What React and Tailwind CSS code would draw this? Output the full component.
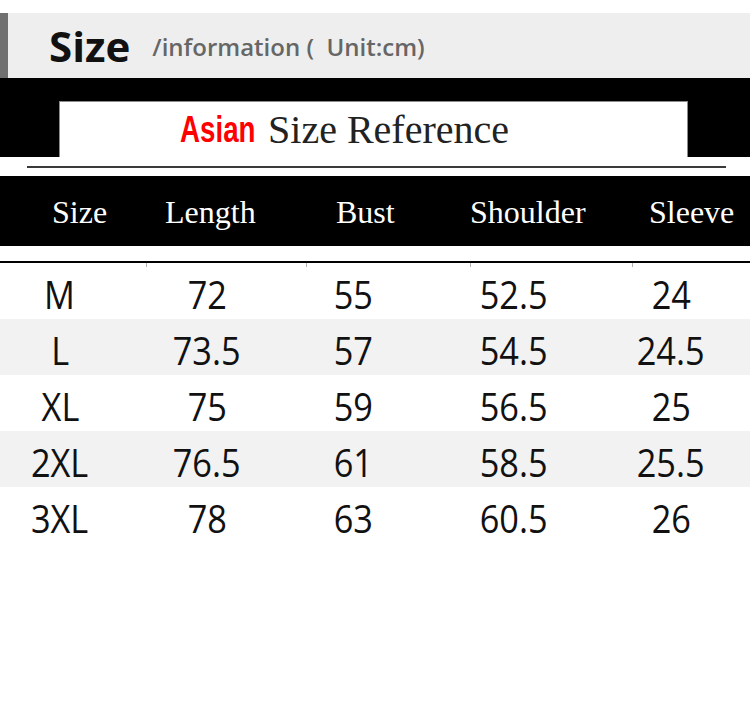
import React from "react";

const rows = [
  ["M", "72", "55", "52.5", "24"],
  ["L", "73.5", "57", "54.5", "24.5"],
  ["XL", "75", "59", "56.5", "25"],
  ["2XL", "76.5", "61", "58.5", "25.5"],
  ["3XL", "78", "63", "60.5", "26"],
];

const headers = [
  ["Size", "w-[113px]"],
  ["Length", "w-[171px]"],
  ["Bust", "w-[134px]"],
  ["Shoulder", "w-[179px]"],
  ["Sleeve", "flex-1"],
];

export default function App() {
  return (
    <div className="w-[750px] h-[707px] bg-white overflow-hidden">
      <div className="h-[13px]" />
      {/* Title bar */}
      <div className="flex h-[65px]">
        <div className="w-[8px] bg-[#707070]" />
        <div className="flex-1 bg-[#eeeeee] flex items-center pl-[41px]">
          <span
            className="text-[42px] font-bold text-[#111] leading-none"
            style={{ fontFamily: '"Open Sans", sans-serif' }}
          >
            Size
          </span>
          <span
            className="ml-[22px] mt-[2px] text-[24px] font-semibold text-[#666] leading-none whitespace-pre"
            style={{ fontFamily: '"Open Sans", sans-serif' }}
          >
            {"/information (  Unit:cm)"}
          </span>
        </div>
      </div>
      {/* Black band with white title box */}
      <div className="h-[79px] bg-black pt-[23px]">
        <div className="ml-[59px] w-[629px] h-full bg-white border-l border-t border-r border-[#8a8a8a] flex items-center pl-[120px]">
          <span
            className="text-[36px] font-bold text-[#ff0000] leading-none inline-block scale-x-[0.77] origin-left -mr-[22px]"
            style={{ fontFamily: '"Liberation Sans", Arial, sans-serif' }}
          >
            Asian
          </span>
          <span
            className="ml-[12px] text-[40px] text-[#222] leading-none"
            style={{ fontFamily: '"Liberation Serif", "Times New Roman", serif' }}
          >
            Size Reference
          </span>
        </div>
      </div>
      {/* gap with line */}
      <div className="h-[19px] flex items-center">
        <div className="ml-[27px] w-[699px] h-[2px] bg-[#3a3a3a]" />
      </div>
      {/* header bar */}
      <div className="h-[70px] bg-black flex items-center pl-[52px]">
        {headers.map(([h, w]) => (
          <div
            key={h}
            className={`${w} text-white text-[32px] leading-none pt-[2px]`}
            style={{ fontFamily: '"Liberation Serif", "Times New Roman", serif' }}
          >
            {h}
          </div>
        ))}
      </div>
      <div className="h-[15px]" />
      <div className="relative h-[2px] bg-black">
        <div className="absolute top-[2px] left-[146px] w-px h-[4px] bg-[#b0b0b0]" />
        <div className="absolute top-[2px] left-[306px] w-px h-[4px] bg-[#b0b0b0]" />
        <div className="absolute top-[2px] left-[470px] w-px h-[4px] bg-[#b0b0b0]" />
        <div className="absolute top-[2px] left-[632px] w-px h-[4px] bg-[#b0b0b0]" />
      </div>
      {/* data rows */}
      <div className="flex flex-col">
        {rows.map((r, i) => (
          <div
            key={r[0]}
            className={`h-[56px] pt-[5px] grid grid-cols-[120px_174px_118px_204px_110px] items-center ${
              i % 2 === 1 ? "bg-[#f2f2f2]" : "bg-white"
            }`}
          >
            {r.map((c, j) => (
              <div key={j} className="flex justify-center">
                <span
                  className="inline-block text-[39px] text-[#111] leading-none scale-x-[0.88]"
                  style={{ fontFamily: '"Open Sans", sans-serif' }}
                >
                  {c}
                </span>
              </div>
            ))}
          </div>
        ))}
      </div>
    </div>
  );
}
